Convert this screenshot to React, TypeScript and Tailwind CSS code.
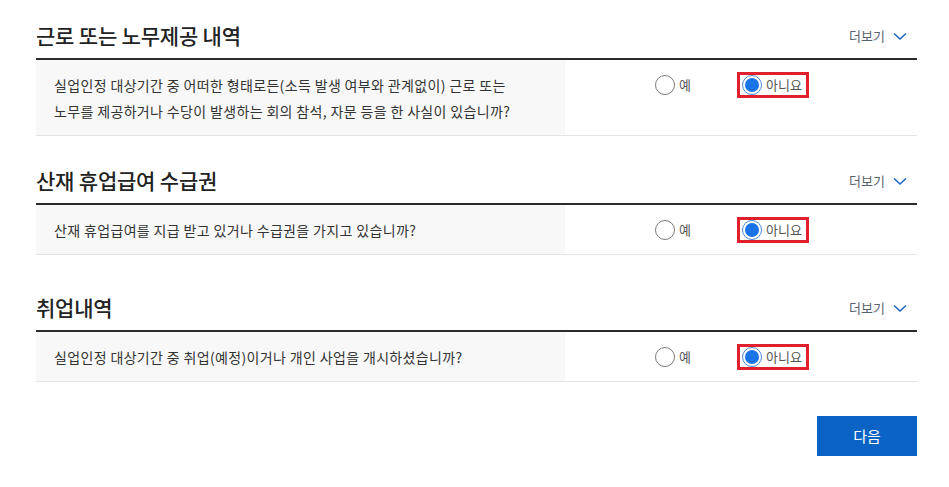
import React from "react";

const font = { fontFamily: '"Noto Sans CJK KR", "Noto Sans", sans-serif' };

function Radio({ checked }: { checked?: boolean }) {
  if (checked) {
    return (
      <span className="flex h-[20px] w-[20px] items-center justify-center rounded-full border border-[#4a86d8] bg-white">
        <span className="h-[14px] w-[14px] rounded-full bg-[#1a73e8]" />
      </span>
    );
  }
  return <span className="h-[20px] w-[20px] rounded-full border border-[#7a7a7a] bg-white" />;
}

function Section({
  title,
  lines,
  mt,
}: {
  title: string;
  lines: string[];
  mt: string;
}) {
  return (
    <div className={mt}>
      <div className="flex h-[46px] items-center justify-between border-b-2 border-[#2b2b2b]">
        <h2 className="text-[21px] font-medium tracking-[-0.2px] text-[#222]">{title}</h2>
        <div className="mr-[10px] flex items-center gap-[8px] text-[13px] text-[#5a6270]">
          <span>더보기</span>
          <svg width="14" height="9" viewBox="0 0 14 9" fill="none">
            <path d="M1 1.5L7 7L13 1.5" stroke="#1b66c9" strokeWidth="1.6" />
          </svg>
        </div>
      </div>
      <div className="flex border-b border-[#e3e3e3]">
        <div className="w-[529px] bg-[#f8f8f8] pb-[11px] pl-[18px] pt-[12px] text-[14px] leading-[26px] tracking-[0.35px] text-[#333]">
          {lines.map((l, i) => (
            <div key={i}>{l}</div>
          ))}
        </div>
        <div className="flex items-start pl-[90px] pt-[12px]">
          <div className="flex h-[26px] w-[82px] items-center gap-[4px] text-[13px] text-[#555]">
            <Radio />
            <span>예</span>
          </div>
          <div className="flex h-[26px] w-[72px] items-center gap-[4px] border-[3px] border-[#e0202c] pl-[2px] text-[13px] text-[#555]">
            <Radio checked />
            <span>아니요</span>
          </div>
        </div>
      </div>
    </div>
  );
}

export default function App() {
  return (
    <div className="h-[487px] w-[949px] bg-white pl-[36px] pr-[32px] pt-[14px]" style={font}>
      <Section
        mt="mt-0"
        title="근로 또는 노무제공 내역"
        lines={[
          "실업인정 대상기간 중 어떠한 형태로든(소득 발생 여부와 관계없이) 근로 또는",
          "노무를 제공하거나 수당이 발생하는 회의 참석, 자문 등을 한 사실이 있습니까?",
        ]}
      />
      <Section
        mt="mt-[23px]"
        title="산재 휴업급여 수급권"
        lines={["산재 휴업급여를 지급 받고 있거나 수급권을 가지고 있습니까?"]}
      />
      <Section
        mt="mt-[31px]"
        title="취업내역"
        lines={["실업인정 대상기간 중 취업(예정)이거나 개인 사업을 개시하셨습니까?"]}
      />
      <div className="mt-[34px] flex justify-end">
        <button className="h-[40px] w-[100px] bg-[#0b63c5] text-[15px] text-white">다음</button>
      </div>
    </div>
  );
}
